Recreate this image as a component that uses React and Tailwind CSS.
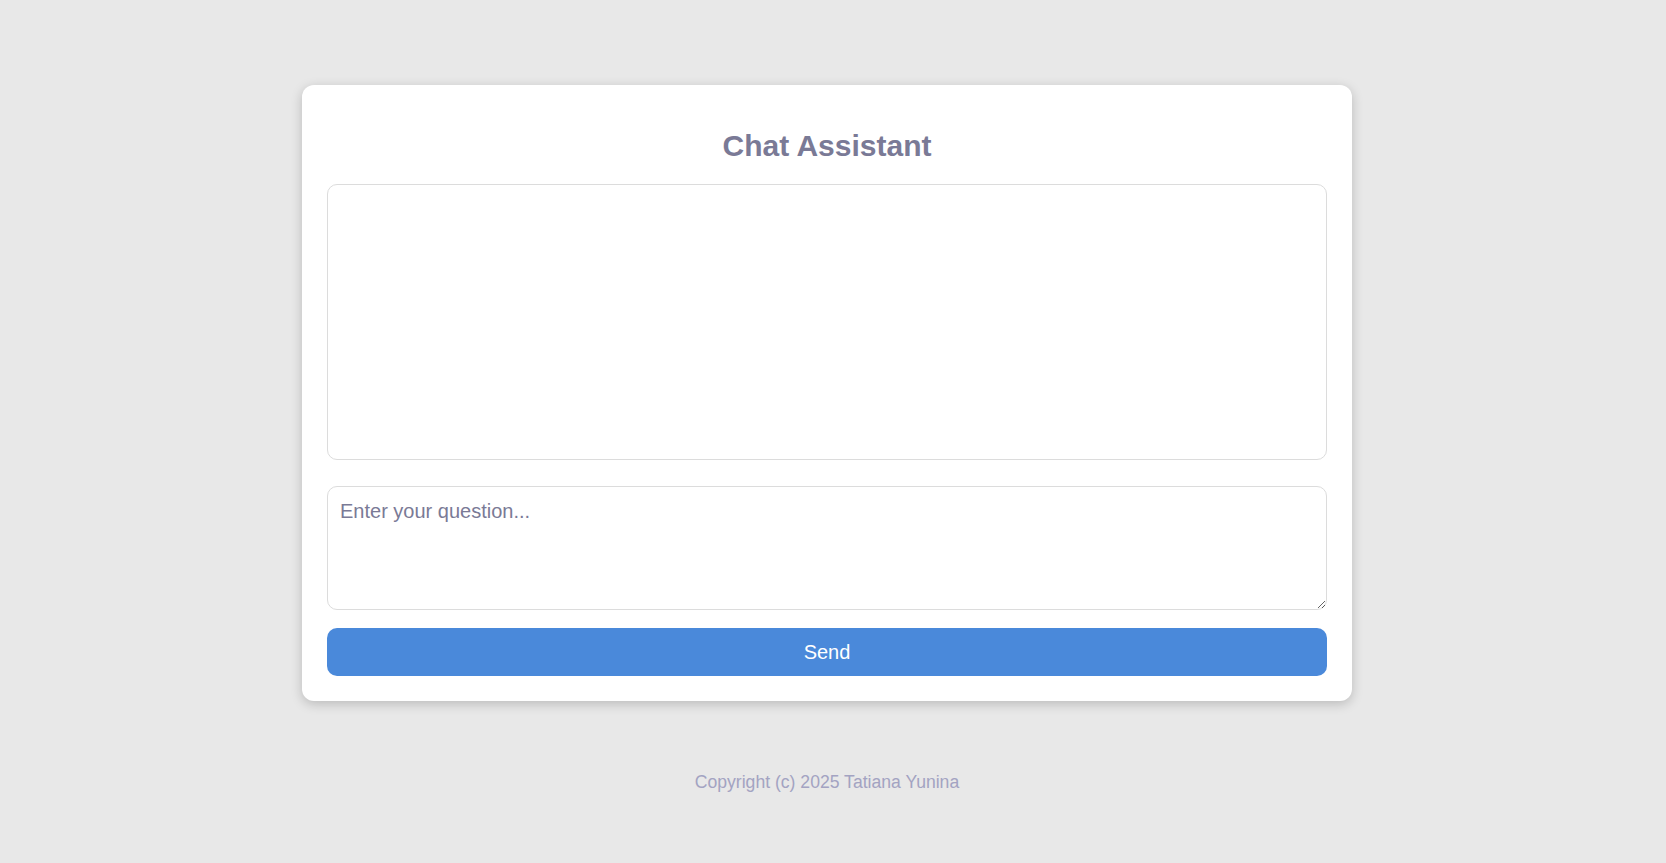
export default function App() {
  return (
    <div
      className="min-h-screen w-full bg-[#e8e8e8]"
      style={{ fontFamily: '"Liberation Sans", Arial, sans-serif' }}
    >
      <div className="flex w-[1654px] flex-col items-center pt-[85px]">
        <div className="flex w-[1050px] flex-col rounded-[12px] bg-white px-[25px] pt-[25px] pb-[25px] shadow-[0_3px_12px_rgba(0,0,0,0.2)]">
          <h2 className="mt-[19px] mb-[20px] text-center text-[30px] leading-[34.5px] font-bold text-[#7a7a96]">
            Chat Assistant
          </h2>
          <div className="h-[276px] w-full rounded-[10px] border border-[#dcdcdc] bg-white"></div>
          <textarea
            className="mt-[26px] block h-[124px] w-full rounded-[10px] border border-[#dcdcdc] bg-white px-[12px] py-[9px] text-[20px] text-[#333] outline-none placeholder:text-[#7a7a96]"
            placeholder="Enter your question..."
          ></textarea>
          <button className="mt-[18px] h-[48px] w-full rounded-[10px] bg-[#4a89da] text-[20px] text-white">
            Send
          </button>
        </div>
        <footer className="mt-[68px] text-[17.6px] text-[#a3a3c2]">
          Copyright (c) 2025 Tatiana Yunina
        </footer>
      </div>
    </div>
  );
}
